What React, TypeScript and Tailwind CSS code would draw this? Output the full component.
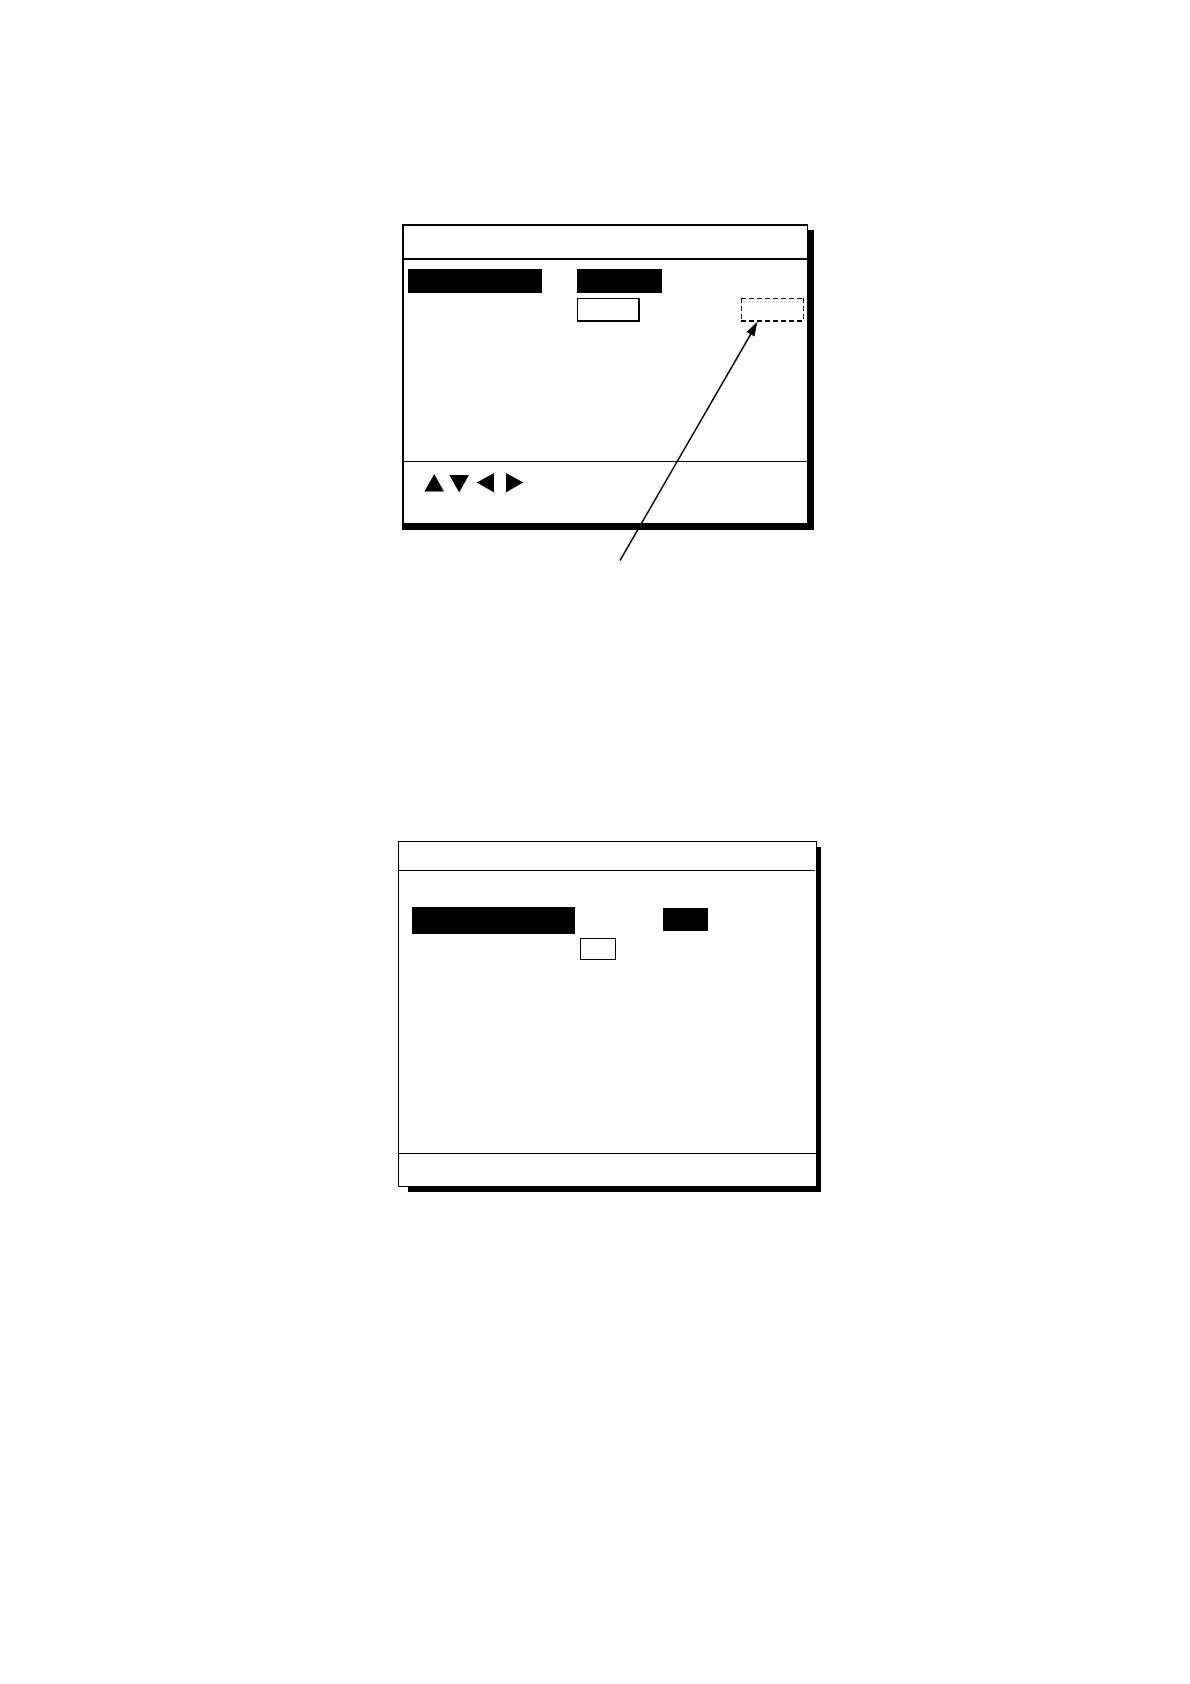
const Arrows = () => (
    <svg className="block h-5 w-[100px]" viewBox="0 0 100 20" fill="black" aria-label="Arrow keys">
        <path d="M10.2 1 L20 18.5 H0.4 Z" />
        <path d="M25.3 2 H45 L35.2 19.5 Z" />
        <path d="M52.7 9.5 L70 0 V19.5 Z" />
        <path d="M99.3 9.5 L82 0 V19.5 Z" />
    </svg>
);

const DashedBox = () => (
    <svg className="block h-6 w-[63px]" viewBox="0 0 63 24" stroke="black" fill="none">
        <path d="M0 0.5 H63" strokeDasharray="5 3" />
        <path d="M0.5 0 V24" strokeDasharray="5 3" />
        <path d="M62.5 0 V24" strokeDasharray="5 3" />
        <path d="M0 23 H63" strokeWidth="2" strokeDasharray="5 3" />
    </svg>
);

// leader line that runs from below the panel up to the dashed box
const Pointer = () => (
    <svg className="absolute left-[214px] top-[94px] h-[242px] w-[142px]" viewBox="0 0 142 242">
        <path d="M2 240.5 L134 12" stroke="black" strokeWidth="1.5" />
        <path d="M139.5 1.5 L136.5 16.5 L128.5 12 Z" fill="black" />
    </svg>
);

const OptionsPanel = () => (
    <section className="relative ml-1 mr-[9px] border border-l-2 border-t-2 border-black bg-white shadow-[6px_6px_0_0_#000,0_6px_0_0_#000]">
        <header className="h-[34px] border-b-2 border-black" />
        <div className="flex h-[201px] flex-col gap-[5px] pl-1 pr-[3px] pt-[9px]">
            <div className="flex gap-[35px]">
                <div className="h-6 w-[134px] bg-black" />
                <div className="h-6 w-[85px] bg-black" />
            </div>
            <div className="flex justify-between pl-[169px]">
                <div className="h-6 w-[63px] border border-b-2 border-r-2 border-black" />
                <DashedBox />
            </div>
        </div>
        <footer className="h-[62px] border-t border-black pl-5 pt-[11px]">
            <Arrows />
        </footer>
        <Pointer />
    </section>
);

const SettingsPanel = () => (
    <section className="border border-black bg-white shadow-[7px_8px_0_-3px_#000,8px_2px_0_-4px_#000]">
        <header className="mr-px h-[29px] border-b border-black" />
        <div className="flex h-[282px] flex-col gap-1 pl-[13px] pt-9">
            <div className="flex gap-[88px]">
                <div className="h-[27px] w-[163px] bg-black" />
                <div className="mt-px h-[23px] w-[45px] bg-black" />
            </div>
            <div className="ml-[168px] h-[22px] w-9 border border-black" />
        </div>
        <footer className="h-[33px] border-t border-black" />
    </section>
);

const App = () => {
    return (
        <main className="min-h-screen bg-white pb-12 pl-[25px] pt-[224px]">
            <div className="mx-auto flex w-full max-w-[419px] flex-col gap-[317px]">
                <OptionsPanel />
                <SettingsPanel />
            </div>
        </main>
    );
};

export default App;
